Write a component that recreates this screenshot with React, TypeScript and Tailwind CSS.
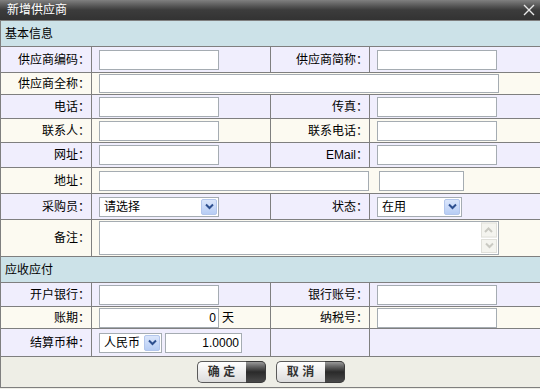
import React from 'react';

const font = { fontFamily: '"Liberation Sans", "Noto Sans CJK SC", sans-serif' };

const LAV = 'bg-[#f0eefd]';
const CREAM = 'bg-[#fcfaf1]';

function TextInput({ w = 'w-[120px]', h = 'h-[20px]', value = '', right = false }: { w?: string; h?: string; value?: string; right?: boolean }) {
    return (
        <input
            type="text"
            defaultValue={value}
            className={`block ${w} ${h} border border-[#a5acb2] bg-white px-[2px] text-[12px] leading-none text-black outline-none ${right ? 'text-right' : ''}`}
            style={font}
        />
    );
}

function Chevron({ color = '#2d4f8f' }: { color?: string }) {
    return (
        <svg width="9" height="7" viewBox="0 0 9 7" className="block">
            <path d="M1 1.5 L4.5 5 L8 1.5" fill="none" stroke={color} strokeWidth="2" />
        </svg>
    );
}

function Select({ w, text }: { w: string; text: string }) {
    return (
        <div className={`${w} h-[20px] border border-[#a5acb2] bg-white flex items-center`}>
            <span className="flex-1 pl-[4px] text-[12px] text-black leading-none">{text}</span>
            <div className="w-[16px] h-[16px] mr-[1px] rounded-[2px] border border-[#b3c6ec] bg-gradient-to-b from-[#dbe6fb] to-[#b7cdf5] flex items-center justify-center">
                <Chevron />
            </div>
        </div>
    );
}

function Label({ children }: { children: React.ReactNode }) {
    return <td className="text-right pr-[1px] text-[12px] leading-none text-black border border-[#7f7f7f]">{children}</td>;
}

function Cell({ children, span }: { children?: React.ReactNode; span?: number }) {
    return (
        <td colSpan={span} className="pl-[7px] border border-[#7f7f7f] leading-none">
            <div className="flex items-center gap-[3px]">{children}</div>
        </td>
    );
}

function Section({ title }: { title: string }) {
    return (
        <tr className="h-[26px] bg-[#cce2e8]">
            <td colSpan={4} className="pl-[4px] text-[12px] leading-none text-black border border-[#7f7f7f]">
                {title}
            </td>
        </tr>
    );
}

function Btn({ text }: { text: string }) {
    return (
        <button type="button" className="flex h-[22px] w-[69px]">
            <span className="flex-1 h-full rounded-l-[5px] border border-r-0 border-[#5a5a5a] bg-gradient-to-b from-white to-[#dcdcdc] flex items-center justify-center text-[12px] font-bold text-[#333]">
                {text}
            </span>
            <span className="w-[20px] h-full rounded-r-[5px] bg-gradient-to-b from-[#9a9a9a] via-[#2a2a2a] to-[#4a4a4a] border border-l-0 border-[#3a3a3a]" />
        </button>
    );
}

export default function App() {
    return (
        <div className="w-[540px] h-[389px] bg-[#eeeee6] overflow-hidden" style={font}>
            <div className="h-[20px] bg-gradient-to-b from-[#808080] via-[#3c3c3c] to-[#333333] flex items-center justify-between pl-[7px] pr-[5px]">
                <span className="text-[12px] text-white leading-none">新增供应商</span>
                <svg width="12" height="12" viewBox="0 0 12 12">
                    <path d="M1 1 L11 11 M11 1 L1 11" stroke="#e8e8e8" strokeWidth="1.4" />
                </svg>
            </div>
            <table className="w-[540px] table-fixed border-collapse">
                <colgroup>
                    <col className="w-[91px]" />
                    <col className="w-[179px]" />
                    <col className="w-[99px]" />
                    <col className="w-[171px]" />
                </colgroup>
                <tbody>
                    <Section title="基本信息" />
                    <tr className={`h-[26px] ${LAV}`}>
                        <Label>供应商编码：</Label>
                        <Cell><TextInput /></Cell>
                        <Label>供应商简称：</Label>
                        <Cell><TextInput /></Cell>
                    </tr>
                    <tr className={`h-[22px] ${CREAM}`}>
                        <Label>供应商全称：</Label>
                        <Cell span={3}><TextInput w="w-[400px]" h="h-[19px]" /></Cell>
                    </tr>
                    <tr className={`h-[24px] ${LAV}`}>
                        <Label>电话：</Label>
                        <Cell><TextInput /></Cell>
                        <Label>传真：</Label>
                        <Cell><TextInput /></Cell>
                    </tr>
                    <tr className={`h-[24px] ${CREAM}`}>
                        <Label>联系人：</Label>
                        <Cell><TextInput /></Cell>
                        <Label>联系电话：</Label>
                        <Cell><TextInput /></Cell>
                    </tr>
                    <tr className={`h-[25px] ${LAV}`}>
                        <Label>网址：</Label>
                        <Cell><TextInput /></Cell>
                        <Label>EMail：</Label>
                        <Cell><TextInput /></Cell>
                    </tr>
                    <tr className={`h-[26px] ${CREAM}`}>
                        <Label>地址：</Label>
                        <Cell span={3}>
                            <TextInput w="w-[270px]" />
                            <span className="w-[4px]" />
                            <TextInput w="w-[85px]" />
                        </Cell>
                    </tr>
                    <tr className={`h-[26px] ${LAV}`}>
                        <Label>采购员：</Label>
                        <Cell><Select w="w-[120px]" text="请选择" /></Cell>
                        <Label>状态：</Label>
                        <Cell><Select w="w-[85px]" text="在用" /></Cell>
                    </tr>
                    <tr className={`h-[37px] ${CREAM}`}>
                        <Label>备注：</Label>
                        <Cell span={3}>
                            <div className="w-[400px] h-[34px] border border-[#a5acb2] bg-white flex">
                                <textarea className="flex-1 resize-none outline-none text-[12px] bg-white" />
                                <div className="w-[17px] flex flex-col gap-[1px] py-[1px] pr-[1px]">
                                    <div className="h-[15px] border border-[#e0e0da] bg-[#f4f4ef] flex items-center justify-center rotate-180">
                                        <Chevron color="#c9c9c2" />
                                    </div>
                                    <div className="h-[15px] border border-[#e0e0da] bg-[#f4f4ef] flex items-center justify-center">
                                        <Chevron color="#c9c9c2" />
                                    </div>
                                </div>
                            </div>
                        </Cell>
                    </tr>
                    <Section title="应收应付" />
                    <tr className={`h-[24px] ${LAV}`}>
                        <Label>开户银行：</Label>
                        <Cell><TextInput /></Cell>
                        <Label>银行账号：</Label>
                        <Cell><TextInput /></Cell>
                    </tr>
                    <tr className={`h-[22px] ${CREAM}`}>
                        <Label>账期：</Label>
                        <Cell>
                            <TextInput value="0" right />
                            <span className="text-[12px] text-black">天</span>
                        </Cell>
                        <Label>纳税号：</Label>
                        <Cell><TextInput /></Cell>
                    </tr>
                    <tr className={`h-[28px] ${LAV}`}>
                        <Label>结算币种：</Label>
                        <Cell>
                            <Select w="w-[63px]" text="人民币" />
                            <TextInput w="w-[77px]" value="1.0000" right />
                        </Cell>
                        <td className="border border-[#7f7f7f]" />
                        <td className="border border-[#7f7f7f]" />
                    </tr>
                    <tr className="h-[31px] bg-[#eeeee6]">
                        <td colSpan={4} className="border border-[#7f7f7f] leading-none">
                            <div className="flex justify-center gap-[10px]">
                                <Btn text="确 定" />
                                <Btn text="取 消" />
                            </div>
                        </td>
                    </tr>
                </tbody>
            </table>
        </div>
    );
}
